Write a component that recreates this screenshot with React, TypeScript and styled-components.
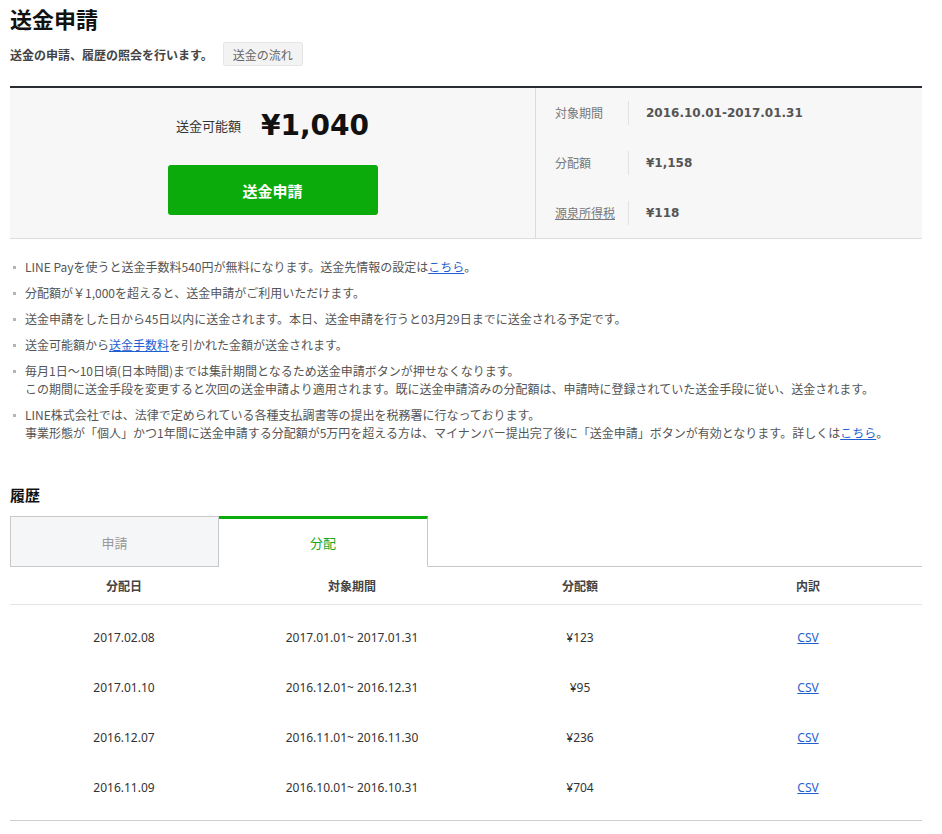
import React from "react";
import styled, { createGlobalStyle } from "styled-components";

const GlobalStyle = createGlobalStyle`
  html, body { margin: 0; padding: 0; background: #fff; }
  body {
    font-family: "Noto Sans CJK JP", "Noto Sans", sans-serif;
    color: #333;
    -webkit-font-smoothing: antialiased;
  }
  * { box-sizing: border-box; }
`;

const Page = styled.div`
  width: 942px;
  padding: 0 20px 0 10px;
`;

const Title = styled.h1`
  margin: 0;
  padding-top: 3px;
  font-size: 22px;
  line-height: 30px;
  font-weight: 700;
  color: #111;
`;

const SubRow = styled.div`
  display: flex;
  align-items: center;
  gap: 10px;
  margin-top: 9px;
  height: 24px;
`;

const SubText = styled.p`
  margin: 0;
  font-size: 12px;
  font-weight: 700;
  color: #444;
`;

const FlowButton = styled.button`
  font-family: inherit;
  height: 24px;
  padding: 0 9px;
  font-size: 12px;
  color: #666;
  background: #f3f3f3;
  border: 1px solid #e6e6e6;
  border-radius: 2px;
`;

const Summary = styled.section`
  margin-top: 20px;
  display: grid;
  grid-template-columns: 526px 1fr;
  border-top: 2px solid #2a2d33;
  border-bottom: 1px solid #dcdcdc;
  background: #f7f7f8;
`;

const Avail = styled.div`
  display: flex;
  flex-direction: column;
  align-items: center;
  padding: 18px 0 23px;
  border-right: 1px solid #dcdcdc;
`;

const AvailLine = styled.div`
  display: flex;
  align-items: center;
  gap: 20px;
  height: 38px;
`;

const AvailLabel = styled.span`
  font-size: 13px;
  color: #333;
`;

const AvailAmount = styled.span`
  font-family: "DejaVu Sans", "Noto Sans", sans-serif;
  font-size: 28px;
  font-weight: 700;
  color: #111;
`;

const SendButton = styled.button`
  margin-top: 21px;
  width: 210px;
  height: 50px;
  font-family: inherit;
  font-size: 15px;
  font-weight: 700;
  color: #fff;
  background: #0aab0a;
  border: none;
  border-radius: 3px;
`;

const Details = styled.div`
  display: flex;
  flex-direction: column;
  padding: 0 0 0 19px;
`;

const DetailRow = styled.div`
  display: flex;
  align-items: center;
  height: 50px;
`;

const DetailLabel = styled.span<{ $link?: boolean }>`
  width: 74px;
  font-size: 12px;
  color: #777;
  text-decoration: ${(p) => (p.$link ? "underline" : "none")};
  border-right: 1px solid #e2e2e2;
  line-height: 24px;
  margin-right: 17px;
`;

const DetailValue = styled.span`
  font-family: "DejaVu Sans", "Noto Sans", sans-serif;
  font-size: 12px;
  font-weight: 700;
  color: #555;
`;

const Notes = styled.ul`
  list-style: none;
  margin: 0;
  padding: 19px 0 0 0;
  display: flex;
  flex-direction: column;
  gap: 8px;
`;

const Note = styled.li`
  position: relative;
  padding-left: 15px;
  font-size: 12px;
  line-height: 18px;
  color: #555;
  &::before {
    content: "";
    position: absolute;
    left: 3px;
    top: 8px;
    width: 3px;
    height: 3px;
    background: #b5b5b5;
  }
`;

const Link = styled.a`
  color: #1f5fd0;
  text-decoration: underline;
`;

const HistoryTitle = styled.h2`
  margin: 43px 0 0;
  font-size: 15px;
  line-height: 20px;
  font-weight: 700;
  color: #111;
`;

const Tabs = styled.div`
  display: flex;
  margin-top: 11px;
  border-bottom: 1px solid #c8c8c8;
`;

const Tab = styled.div<{ $active?: boolean }>`
  width: 209px;
  height: 51px;
  margin-bottom: -1px;
  display: flex;
  align-items: center;
  justify-content: center;
  font-size: 13px;
  color: ${(p) => (p.$active ? "#19a519" : "#999")};
  background: ${(p) => (p.$active ? "#fff" : "#f5f6f8")};
  border: 1px solid #c8c8c8;
  border-top: ${(p) => (p.$active ? "3px solid #0aab0a" : "1px solid #c8c8c8")};
  border-bottom: ${(p) => (p.$active ? "1px solid #fff" : "1px solid #c8c8c8")};
  border-left: ${(p) => (p.$active ? "none" : "1px solid #c8c8c8")};
  padding-top: ${(p) => (p.$active ? "0" : "2px")};
`;

const Table = styled.div`
  border-bottom: 1px solid #cfcfcf;
`;

const HeadRow = styled.div`
  display: grid;
  grid-template-columns: repeat(4, 1fr);
  height: 38px;
  align-items: center;
  border-bottom: 1px solid #e4e4e4;
`;

const HeadCell = styled.div`
  text-align: center;
  font-size: 12px;
  font-weight: 700;
  color: #444;
`;

const Body = styled.div`
  padding: 7px 0 8px;
`;

const Row = styled.div`
  display: grid;
  grid-template-columns: repeat(4, 1fr);
  height: 50px;
  align-items: center;
`;

const Cell = styled.div`
  text-align: center;
  font-family: "Liberation Sans Narrow", "Noto Sans", sans-serif;
  font-size: 12px;
  color: #333;
`;

const notes: React.ReactNode[][] = [
  [
    <>
      LINE Payを使うと送金手数料540円が無料になります。送金先情報の設定は<Link href="#">こちら</Link>。
    </>,
  ],
  [<>分配額が￥1,000を超えると、送金申請がご利用いただけます。</>],
  [<>送金申請をした日から45日以内に送金されます。本日、送金申請を行うと03月29日までに送金される予定です。</>],
  [
    <>
      送金可能額から<Link href="#">送金手数料</Link>を引かれた金額が送金されます。
    </>,
  ],
  [
    <>毎月1日～10日頃(日本時間)までは集計期間となるため送金申請ボタンが押せなくなります。</>,
    <>この期間に送金手段を変更すると次回の送金申請より適用されます。既に送金申請済みの分配額は、申請時に登録されていた送金手段に従い、送金されます。</>,
  ],
  [
    <>LINE株式会社では、法律で定められている各種支払調書等の提出を税務署に行なっております。</>,
    <>
      事業形態が「個人」かつ1年間に送金申請する分配額が5万円を超える方は、マイナンバー提出完了後に「送金申請」ボタンが有効となります。詳しくは<Link href="#">こちら</Link>。
    </>,
  ],
];

const rows = [
  ["2017.02.08", "2017.01.01~ 2017.01.31", "¥123"],
  ["2017.01.10", "2016.12.01~ 2016.12.31", "¥95"],
  ["2016.12.07", "2016.11.01~ 2016.11.30", "¥236"],
  ["2016.11.09", "2016.10.01~ 2016.10.31", "¥704"],
];

export default function App() {
  return (
    <Page>
      <GlobalStyle />
      <Title>送金申請</Title>
      <SubRow>
        <SubText>送金の申請、履歴の照会を行います。</SubText>
        <FlowButton>送金の流れ</FlowButton>
      </SubRow>

      <Summary>
        <Avail>
          <AvailLine>
            <AvailLabel>送金可能額</AvailLabel>
            <AvailAmount>¥1,040</AvailAmount>
          </AvailLine>
          <SendButton>送金申請</SendButton>
        </Avail>
        <Details>
          <DetailRow>
            <DetailLabel>対象期間</DetailLabel>
            <DetailValue>2016.10.01-2017.01.31</DetailValue>
          </DetailRow>
          <DetailRow>
            <DetailLabel>分配額</DetailLabel>
            <DetailValue>¥1,158</DetailValue>
          </DetailRow>
          <DetailRow>
            <DetailLabel $link>源泉所得税</DetailLabel>
            <DetailValue>¥118</DetailValue>
          </DetailRow>
        </Details>
      </Summary>

      <Notes>
        {notes.map((lines, i) => (
          <Note key={i}>
            {lines.map((l, j) => (
              <div key={j}>{l}</div>
            ))}
          </Note>
        ))}
      </Notes>

      <HistoryTitle>履歴</HistoryTitle>
      <Tabs>
        <Tab>申請</Tab>
        <Tab $active>分配</Tab>
      </Tabs>
      <Table>
        <HeadRow>
          <HeadCell>分配日</HeadCell>
          <HeadCell>対象期間</HeadCell>
          <HeadCell>分配額</HeadCell>
          <HeadCell>内訳</HeadCell>
        </HeadRow>
        <Body>
          {rows.map((r) => (
            <Row key={r[0]}>
              <Cell>{r[0]}</Cell>
              <Cell>{r[1]}</Cell>
              <Cell>{r[2]}</Cell>
              <Cell>
                <Link href="#">CSV</Link>
              </Cell>
            </Row>
          ))}
        </Body>
      </Table>
    </Page>
  );
}
